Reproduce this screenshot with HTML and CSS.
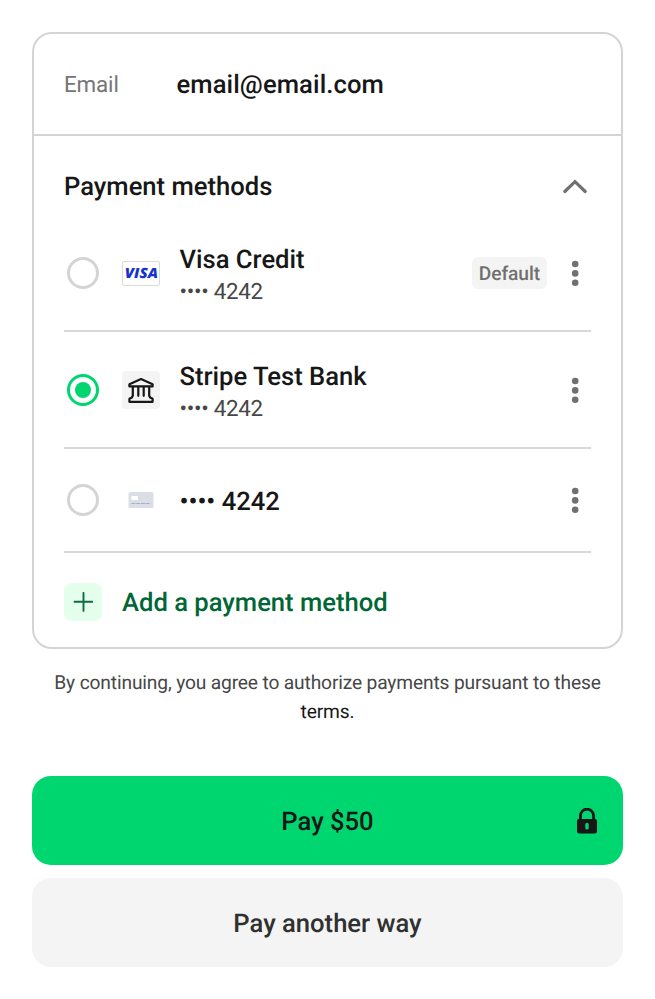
FILE: index.html
```html
<!DOCTYPE html>
<html lang="en">
<head>
<meta charset="utf-8">
<title>Payment</title>
<link rel="stylesheet" href="styles.css">
</head>
<body>
<main class="checkout">
  <section class="card">
    <div class="email">
      <span class="email-label">Email</span>
      <span class="email-value">email@email.com</span>
    </div>
    <div class="methods">
      <header class="methods-head">
        <h2 class="methods-title">Payment methods</h2>
        <svg class="chevron" width="32" height="32" viewBox="0 0 32 32"><path d="M5.800 20.500 16 10.700 26.200 20.500" fill="none" stroke="#707070" stroke-width="3.200" stroke-linecap="round" stroke-linejoin="miter"/></svg>
      </header>

      <div class="method">
        <span class="radio"></span>
        <span class="visa"><span class="visa-word">VISA</span></span>
        <div class="details"><div class="name">Visa Credit</div><div class="number">•••• 4242</div></div>
        <span class="badge">Default</span>
        <svg class="more" width="32" height="32" viewBox="0 0 32 32" fill="#707070"><circle cx="16.200" cy="7" r="3.300"/><circle cx="16.200" cy="16.400" r="3.300"/><circle cx="16.200" cy="25.800" r="3.300"/></svg>
      </div>

      <div class="method">
        <span class="radio radio-on"></span>
        <span class="bank"><svg width="26" height="26" viewBox="0 0 26 26" fill="none" stroke="#171717" stroke-width="2.200" stroke-linejoin="round" stroke-linecap="round"><path d="M1.400 9.400V7.200L13 2 24.600 7.200V9.400ZM4.800 9.500V18.800L3.800 20.600 1.400 21.800V24.800H24.600V21.800L22.200 20.600 21.200 18.800V9.500M10.300 10.500V18.800M15.700 10.500V18.800"/></svg></span>
        <div class="details"><div class="name">Stripe Test Bank</div><div class="number">•••• 4242</div></div>
        <svg class="more" width="32" height="32" viewBox="0 0 32 32" fill="#707070"><circle cx="16.200" cy="7" r="3.300"/><circle cx="16.200" cy="16.400" r="3.300"/><circle cx="16.200" cy="25.800" r="3.300"/></svg>
      </div>

      <div class="method method-short">
        <span class="radio"></span>
        <span class="generic"><svg width="26" height="16" viewBox="0 0 26 16"><rect x=".500" width="25" height="16" rx="1.500" fill="#dcdee6"/><rect x="3.500" y="4" width="6.500" height="4" rx=".6" fill="#fff"/><path d="M3.500 11.500H21.700" stroke="#a9acc2" stroke-width="1" stroke-dasharray="4 .7"/></svg></span>
        <div class="details"><div class="name">•••• 4242</div></div>
        <svg class="more" width="32" height="32" viewBox="0 0 32 32" fill="#707070"><circle cx="16.200" cy="7" r="3.300"/><circle cx="16.200" cy="16.400" r="3.300"/><circle cx="16.200" cy="25.800" r="3.300"/></svg>
      </div>

      <div class="add">
        <span class="add-icon"><svg width="20" height="20" viewBox="0 0 20 20"><path d="M10.500 .9V18.900M1.500 9.700H19.300" stroke="#106b40" stroke-width="1.900" stroke-linecap="round"/></svg></span>
        <span class="add-text">Add a payment method</span>
      </div>
    </div>
  </section>

  <p class="legal">By continuing, you agree to authorize payments pursuant to these <span class="terms">terms.</span></p>

  <div class="button pay">Pay $50
    <svg class="lock" width="20" height="26" viewBox="0 0 20 26"><path d="M3.400 12V7.800a6.600 6.600 0 0 1 13.200 0V12" fill="none" stroke="#171717" stroke-width="2.800"/><rect y="11" width="20" height="14.400" rx="1.800" fill="#171717"/><rect x="8.300" y="14.800" width="3.400" height="6.800" rx="1.700" fill="#00d66f"/></svg>
  </div>
  <div class="button other">Pay another way</div>
</main>
</body>
</html>
```

FILE: styles.css
```css
* { box-sizing: border-box; }

body {
  margin: 0;
  background: #fff;
  color: #171717;
  font-family: Roboto, sans-serif;
  font-size: 25.6px;
  text-rendering: geometricPrecision;
}

.checkout { padding: 32px; }

.card {
  height: 617px;
  border: 2px solid #d4d4d4;
  border-radius: 20px;
}

.email {
  display: flex;
  align-items: center;
  height: 102px;
  padding: 2px 0 0 30px;
  border-bottom: 2px solid #d4d4d4;
}

.email-label {
  width: 112.5px;
  color: #757575;
  font-size: 22.4px;
  letter-spacing: -0.15px;
}

.email-value {
  font-weight: 500;
  letter-spacing: 0.1px;
}

.methods { padding: 0 30px; }

.methods-head {
  display: flex;
  align-items: center;
  justify-content: space-between;
  height: 79px;
  padding-top: 22px;
}

.methods-title {
  margin: 0;
  font-size: 25.6px;
  font-weight: 500;
}

.method {
  display: flex;
  align-items: center;
  height: 117px;
  padding-left: 3px;
  border-bottom: 2px solid #d8d8d8;
}

.method-short { height: 104px; }

.radio {
  flex: none;
  display: flex;
  align-items: center;
  justify-content: center;
  width: 32px;
  height: 32px;
  margin-right: 23px;
  border: 3px solid #d4d4d4;
  border-radius: 50%;
}

.radio-on { border-color: #00d66f; }

.radio-on::after {
  content: "";
  width: 16px;
  height: 16px;
  border-radius: 50%;
  background: #00d66f;
}

.visa,
.bank,
.generic {
  flex: none;
  display: flex;
  align-items: center;
  justify-content: center;
  width: 38px;
  margin-right: 19.5px;
}

.visa {
  height: 25px;
  margin-top: 1px;
  padding-top: 2px;
  border: 1px solid #dadada;
  border-radius: 2px;
}

.visa-word {
  color: #1434cb;
  font: italic 800 14px/1 "Open Sans", sans-serif;
  transform: scaleX(1.08);
}

.bank {
  height: 38px;
  border-radius: 4px;
  background: #f4f4f4;
}

.details {
  flex: 1;
  padding-top: 6px;
}

.method-short .details { padding-top: 4px; }

.name {
  font-weight: 500;
  line-height: 32px;
}

.number {
  color: #474747;
  font-size: 22.4px;
  line-height: 32px;
  letter-spacing: -0.3px;
}

.badge {
  height: 32px;
  padding: 0 7px;
  margin-right: 12px;
  border-radius: 6px;
  background: #f4f4f4;
  color: #707070;
  font-size: 19.2px;
  font-weight: 500;
  line-height: 34px;
  letter-spacing: -0.1px;
}

.add {
  display: flex;
  align-items: center;
  height: 97px;
}

.add-icon {
  display: flex;
  align-items: center;
  justify-content: center;
  width: 38px;
  height: 38px;
  margin-right: 20px;
  border-radius: 8px;
  background: #e4ffeb;
}

.add-text {
  padding-top: 3px;
  color: #006635;
  font-weight: 500;
}

.legal {
  margin: 19px 0 50px;
  color: #474747;
  font-size: 19.2px;
  line-height: 29px;
  letter-spacing: -0.15px;
  text-align: center;
}

.terms { color: #171717; }

.button {
  position: relative;
  display: flex;
  align-items: center;
  justify-content: center;
  height: 89px;
  padding-top: 3px;
  border-radius: 19px;
  font-weight: 500;
}

.pay {
  margin-bottom: 13px;
  background: #00d66f;
}

.lock {
  position: absolute;
  right: 26px;
  top: 32px;
}

.other {
  background: #f4f4f4;
  color: #303030;
}
```
